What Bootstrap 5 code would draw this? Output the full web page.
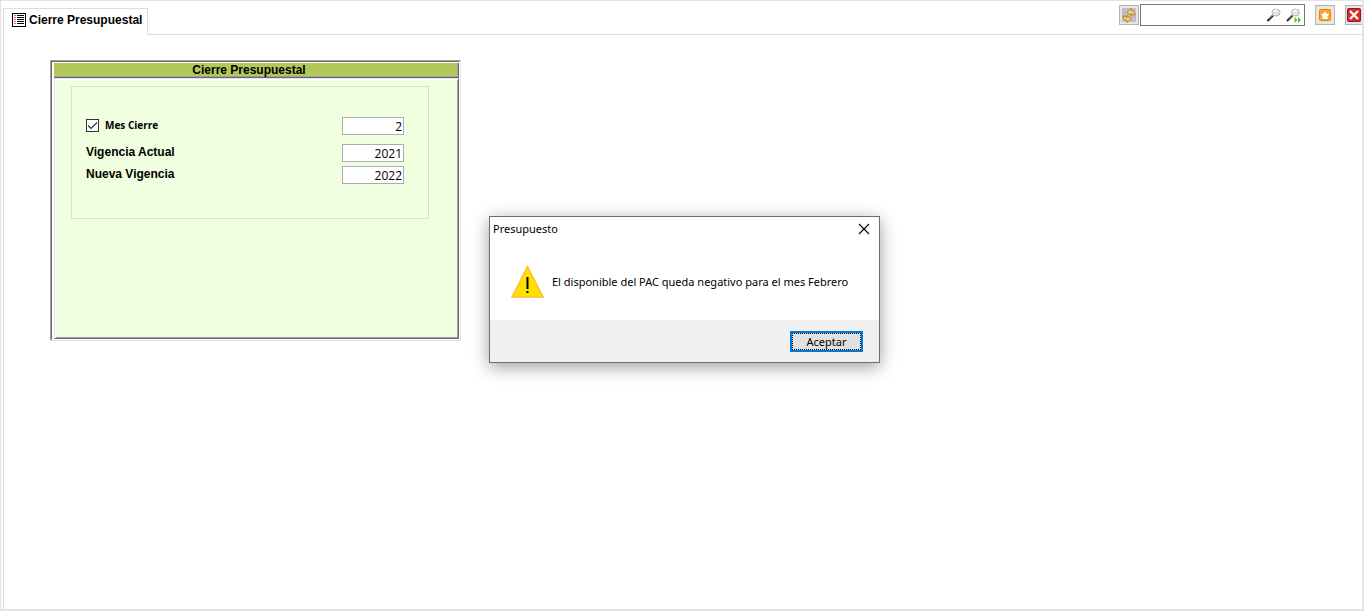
<!DOCTYPE html>
<html lang="es">
<head>
<meta charset="utf-8">
<meta name="viewport" content="width=device-width, initial-scale=1">
<title>Cierre Presupuestal</title>
<link href="https://cdn.jsdelivr.net/npm/bootstrap@5.3.0/dist/css/bootstrap.min.css" rel="stylesheet">
<style>
body{font:12px/16px "Liberation Sans",Arial,sans-serif;color:#000;background:#fff}
.app-window{height:100vh;padding:7px 0 0 2px;border:1px solid #e3e3e3;border-right-width:2px;border-bottom-width:2px}
.top-bar{height:27px}
.doc-tab{padding:0 5px 4px 8px;border:1px solid #dcdcdc;border-bottom:0;gap:3px;font-weight:700;color:#000;text-decoration:none}
.doc-tab:hover{color:#000}
.tools{border-bottom:1px solid #dcdcdc}
.tool-set{margin-top:-4px;gap:10px}
.tool-btn{width:20px;height:20px;padding:1px;margin-top:1px;border:1px solid #b4b4b4;background:#e6e6e6;line-height:0;display:flex;align-items:center;justify-content:center}
.edge-btn{width:17px}
.search-box{width:165px;height:22px;border:1px solid #767676;background:#fff;padding:0 2px 0 0;margin-left:1px}
.search-box input{min-width:0;border:0;outline:0;padding:0 4px;font-size:12px}
.icon-btn{border:0;background:none;padding:0;line-height:0;width:16px;height:16px}
.doc-body{border-left:1px solid #dcdcdc;padding:25px 0 0 46px}
.form-frame{width:411px;border:1px solid;border-color:#a0a0a0 #e3e3e3 #e3e3e3 #a0a0a0}
.form-inner{border:1px solid;border-color:#696969 #fff #fff #696969;padding:1px 0 0 2px}
.form-title{background:#b2c95a;height:15px;font-size:12px;line-height:14px;font-weight:700;text-align:center;margin:0;padding-right:14px;border-bottom:1px solid #696969;border-right:1px solid #696969;box-shadow:inset -1px -1px #a0a0a0}
.form-body{background:#f0ffe0;height:261px;padding:7px 29px 0 16px;border:1px solid;border-color:#e3e3e3 #696969 #696969 #e3e3e3;box-shadow:inset 1px 1px #fff,inset -1px -1px #a0a0a0}
.group-box{border:1px solid #dcdcdc;height:133px;padding:30px 24px 0 14px}
.month-row{margin-bottom:9px}
.field-row{height:18px}
.field-row label{font-weight:700}
.field-row .month-label{font:700 10px/16px "Open Sans","Segoe UI",sans-serif}
.num{width:62px;height:18px;border:1px solid #abadb3;border-radius:0;background:#fff;padding:0 1px 0 0;text-align:right;font:12px/16px "Open Sans",sans-serif;color:#000}
.check{appearance:none;width:13px;height:13px;margin:2px 6px 0 0;border:1px solid #333;background:#fff}
.check:checked{background:#fff url("data:image/svg+xml,%3Csvg xmlns='http://www.w3.org/2000/svg' viewBox='0 0 11 11'%3E%3Cpath d='M1 5.5 4 8.5 10 2.5' fill='none' stroke='%23333' stroke-width='1.2'/%3E%3C/svg%3E")}
.dialog-layer{position:absolute;inset:216px 0 auto 5px;pointer-events:none}
.msg-box{width:391px;background:#fff;border:1px solid #6d6d6d;box-shadow:0 4px 16px rgba(0,0,0,.38);font:11px/16px "Noto Sans","Segoe UI",sans-serif;pointer-events:auto}
.msg-head{height:24px;padding:0 7px 0 3px}
.msg-body{height:79px;padding:2px 16px 0 21px;gap:8px}
.msg-foot{height:42px;background:#f0f0f0;padding-right:16px}
.ok-btn{width:73px;height:21px;border:2px solid #0078d7;background:#e1e1e1;padding:0;line-height:17px;font-size:11px;color:#000;outline:1px dotted #000;outline-offset:-3px}
</style>
</head>
<body>
<div class="app-window d-flex flex-column">
  <header class="top-bar d-flex">
    <a href="#cierre" class="doc-tab d-flex align-items-center text-nowrap">
      <svg width="14" height="14" viewBox="0 0 14 14" aria-hidden="true" shape-rendering="crispEdges"><rect x=".5" y=".5" width="13" height="13" fill="#fff" stroke="#000"/><path d="M5 2.500h7M5 4.500h7M5 6.500h7M5 8.500h7M5 10.500h7" stroke="#000"/><path d="M2 2.500h2M2 4.500h2M2 6.500h2M2 8.500h2M2 10.500h2" stroke="#d66"/></svg>
      <span>Cierre Presupuestal</span>
    </a>
    <div class="tools flex-grow-1 d-flex justify-content-end">
      <div class="tool-set d-flex align-items-start">
        <div class="d-flex align-items-start">
          <button class="tool-btn" aria-label="Actualizar" type="button"><svg class="flex-shrink-0" width="16" height="16" viewBox="0 0 16 16"><path fill="#c0c0c0" d="M1 1h14v14H1z"/><path d="M6 5.500 10 1.500V3.500q3.500 0 4 4.500h-2.500q-.2-1.500-1.500-1.500V8.500z" fill="#fbd560" stroke="#a86f14" stroke-width=".8"/><path d="M10 11.500 6 15.500V13.500q-3.500 0-4-4.500h2.500q.2 1.500 1.500 1.500V8.500z" fill="#fbd560" stroke="#a86f14" stroke-width=".8"/></svg></button>
          <div class="search-box d-flex align-items-center">
            <input class="flex-grow-1" type="text" aria-label="Buscar">
            <button class="icon-btn me-1" type="button" aria-label="Buscar ahora"><svg width="16" height="16" viewBox="0 0 16 16"><path d="M1.500 14 7 8.500" stroke="#222" stroke-width="2"/><path d="m3 12 4-4" stroke="#999" stroke-width=".7"/><ellipse cx="10" cy="5.500" rx="4" ry="3.500" fill="#e4e4e4" stroke="#b4b4b4"/><path d="M8 5q1-2 3-2" fill="none" stroke="#fff" stroke-width="1.500"/></svg></button>
            <button class="icon-btn" type="button" aria-label="Buscar siguiente"><svg width="16" height="16" viewBox="0 0 16 16"><path d="M1 14 6.500 8.500" stroke="#222" stroke-width="2"/><path d="m2.500 12 4-4" stroke="#999" stroke-width=".7"/><ellipse cx="9.500" cy="5.500" rx="4" ry="3.500" fill="#e4e4e4" stroke="#b4b4b4"/><path d="M7.500 5q1-2 3-2" fill="none" stroke="#fff" stroke-width="1.500"/><path d="m8.500 10 3 3-3 3zM12 10l3 3-3 3z" fill="#4fc31a"/></svg></button>
          </div>
        </div>
        <button class="tool-btn" type="button" aria-label="Favoritos"><svg class="flex-shrink-0" width="14" height="14" viewBox="0 0 14 14"><rect x="1.500" y="1.500" width="11" height="11" rx="1" fill="#ffa51c" stroke="#e78405"/><path d="m7 3 1.300 2.500 3 .5-2 2 .5 3H4.200l.5-3-2-2 3-.5z" fill="#fff"/></svg></button>
        <button class="tool-btn edge-btn border-end-0" type="button" aria-label="Cerrar"><svg class="flex-shrink-0" width="14" height="14" viewBox="0 0 14 14"><rect x=".5" y=".5" width="13" height="13" rx="1" fill="#d82a26" stroke="#841b1b"/><path d="m3 3 8 8m0-8-8 8" stroke="#fff" stroke-width="2.200"/></svg></button>
      </div>
    </div>
  </header>
  <main class="doc-body flex-grow-1" id="cierre">
    <form class="form-frame">
      <div class="form-inner">
        <h1 class="form-title">Cierre Presupuestal</h1>
        <div class="form-body">
          <div class="group-box">
            <div class="field-row month-row d-flex align-items-start">
              <input class="check" type="checkbox" id="usar-mes" checked>
              <label class="month-label me-auto" for="usar-mes">Mes Cierre</label>
              <input class="num" type="text" aria-label="Mes Cierre" value="2">
            </div>
            <div class="field-row d-flex align-items-start justify-content-between mb-1"><label for="actual">Vigencia Actual</label><input class="num" id="actual" type="text" value="2021"></div>
            <div class="field-row d-flex align-items-start justify-content-between"><label for="nueva">Nueva Vigencia</label><input class="num" id="nueva" type="text" value="2022"></div>
          </div>
        </div>
      </div>
    </form>
  </main>
</div>
<div class="dialog-layer d-flex justify-content-center">
  <section class="msg-box" role="alertdialog" aria-labelledby="msg-title">
    <div class="msg-head d-flex align-items-center justify-content-between">
      <span id="msg-title">Presupuesto</span>
      <button class="icon-btn" type="button" aria-label="Cerrar aviso"><svg width="12" height="12" viewBox="0 0 12 12"><path d="m1 1 10 10M11 1 1 11" stroke="#000" stroke-width="1.100"/></svg></button>
    </div>
    <div class="msg-body d-flex align-items-center">
      <svg class="flex-shrink-0" width="33" height="33" viewBox="0 0 33 33" aria-hidden="true"><path d="M16.500 1.500 32 32H1z" fill="#ffe000" stroke="#ffb92e" stroke-width="1.300"/><path d="M15.500 12h2v12h-2zM15.500 26h2v2h-2z"/></svg>
      <span class="text-nowrap">El disponible del PAC queda negativo para el mes Febrero</span>
    </div>
    <div class="msg-foot d-flex align-items-center justify-content-end"><button class="ok-btn" type="button">Aceptar</button></div>
  </section>
</div>
<script src="https://cdn.jsdelivr.net/npm/bootstrap@5.3.0/dist/js/bootstrap.bundle.min.js"></script>
</body>
</html>
